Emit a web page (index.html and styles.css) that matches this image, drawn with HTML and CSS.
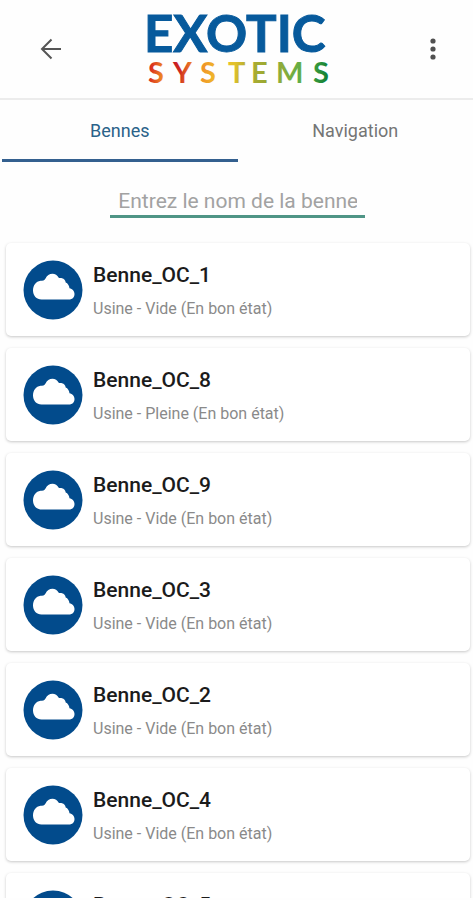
FILE: index.html
```html
<!DOCTYPE html>
<html lang="fr">
<head>
<meta charset="utf-8">
<meta name="viewport" content="width=device-width, initial-scale=1">
<title>Exotic Systems</title>
<link rel="stylesheet" href="styles.css">
</head>
<body>
<svg class="defs" aria-hidden="true">
  <symbol id="cloud" viewBox="0 0 60 60">
    <circle cx="30" cy="30" r="29.5" fill="#024b8c"/>
    <path fill="#fff" d="M18.500 39.500C13.500 39.500 10 35.500 10 30.500C10 25.500 13 21.500 17.500 20.800C19.500 20.500 21.500 20.800 22.500 18.500C23.800 15.500 26.500 13.800 29.500 13.800C32 13.800 34.500 15.300 35.500 17.500C36.500 18.500 37.500 17.700 39 18.200C41 18.800 42.500 20.300 42.700 22.500C44.800 23.300 46.200 25.500 46.500 28.300C49.300 28.800 51.500 31.200 51.500 34C51.500 37.300 49.300 39.500 46 39.500Z"/>
  </symbol>
</svg>
<header class="bar">
  <button class="icon-button" aria-label="Retour">
    <svg width="24" height="24" viewBox="0 0 24 24"><path d="M22 12H3M12.500 2.500L3 12L12.500 21.500" fill="none" stroke="#555" stroke-width="2"/></svg>
  </button>
  <svg class="logo" width="190" height="98" viewBox="0 0 190 98" role="img" aria-label="Exotic Systems">
    <defs>
      <linearGradient id="spectrum" gradientUnits="userSpaceOnUse" x1="2" y1="60" x2="186" y2="80">
        <stop offset="0" stop-color="#c91420"/>
        <stop offset=".04" stop-color="#dc3a20"/>
        <stop offset=".11" stop-color="#f29a26"/>
        <stop offset=".13" stop-color="#c41420"/>
        <stop offset=".19" stop-color="#cf2a20"/>
        <stop offset=".25" stop-color="#ee8a25"/>
        <stop offset=".31" stop-color="#f09428"/>
        <stop offset=".4" stop-color="#eec32c"/>
        <stop offset=".48" stop-color="#e2c12c"/>
        <stop offset=".54" stop-color="#b5ae32"/>
        <stop offset=".66" stop-color="#98a832"/>
        <stop offset=".74" stop-color="#8dac3c"/>
        <stop offset=".86" stop-color="#55ad48"/>
        <stop offset=".91" stop-color="#3c9a3c"/>
        <stop offset="1" stop-color="#087a35"/>
      </linearGradient>
    </defs>
    <text class="logo-name" x="0" y="52">EXOTIC</text>
    <text class="logo-sub" x="4 29 56 84 107 132 169" y="83">SYSTEMS</text>
  </svg>
  <button class="icon-button" aria-label="Plus d'options">
    <svg width="24" height="24" viewBox="0 0 24 24" fill="#505050"><circle cx="12" cy="4" r="2.600"/><circle cx="12" cy="12" r="2.600"/><circle cx="12" cy="20" r="2.600"/></svg>
  </button>
</header>
<nav class="tabs">
  <a class="tab active" href="#bennes" aria-current="page">Bennes</a>
  <a class="tab" href="#navigation">Navigation</a>
</nav>
<main>
  <div class="search"><input type="text" aria-label="Nom de la benne" placeholder="Entrez le nom de la benne"></div>
  <ul class="list">
    <li class="card"><svg class="avatar" aria-hidden="true"><use href="#cloud"/></svg><div class="info"><h2>Benne_OC_1</h2><p>Usine - Vide (En bon état)</p></div></li>
    <li class="card"><svg class="avatar" aria-hidden="true"><use href="#cloud"/></svg><div class="info"><h2>Benne_OC_8</h2><p>Usine - Pleine (En bon état)</p></div></li>
    <li class="card"><svg class="avatar" aria-hidden="true"><use href="#cloud"/></svg><div class="info"><h2>Benne_OC_9</h2><p>Usine - Vide (En bon état)</p></div></li>
    <li class="card"><svg class="avatar" aria-hidden="true"><use href="#cloud"/></svg><div class="info"><h2>Benne_OC_3</h2><p>Usine - Vide (En bon état)</p></div></li>
    <li class="card"><svg class="avatar" aria-hidden="true"><use href="#cloud"/></svg><div class="info"><h2>Benne_OC_2</h2><p>Usine - Vide (En bon état)</p></div></li>
    <li class="card"><svg class="avatar" aria-hidden="true"><use href="#cloud"/></svg><div class="info"><h2>Benne_OC_4</h2><p>Usine - Vide (En bon état)</p></div></li>
    <li class="card"><svg class="avatar" aria-hidden="true"><use href="#cloud"/></svg><div class="info"><h2>Benne_OC_5</h2><p>Usine - Vide (En bon état)</p></div></li>
  </ul>
</main>
</body>
</html>
```
FILE: styles.css
```css
* { box-sizing: border-box; }
body {
  margin: 0;
  height: 100vh;
  padding-bottom: 2px;
  display: flex;
  flex-direction: column;
  overflow: hidden;
  background: #fefefe;
  font-family: Roboto, "Liberation Sans", sans-serif;
}
.defs { display: none; }
.bar {
  flex: none;
  display: flex;
  align-items: center;
  justify-content: space-between;
  height: 100px;
  padding: 0 16px;
  border-bottom: 2px solid #ececec;
}
.icon-button {
  display: flex;
  align-items: center;
  justify-content: center;
  width: 48px;
  height: 48px;
  margin-left: 12px;
  padding: 0;
  border: 0;
  background: none;
}
.icon-button:first-child { margin: 0 6px 0 11px; }
.logo { overflow: visible; }
.logo-name { font: 700 51px Lato, sans-serif; fill: #075a9c; stroke: #075a9c; stroke-width: 1px; }
.logo-sub { font: 700 29px Lato, sans-serif; fill: url(#spectrum); }
.tabs { flex: none; display: flex; padding-left: 2px; }
.tab {
  flex: 1;
  height: 62px;
  border-bottom: 3px solid transparent;
  line-height: 62px;
  text-align: center;
  text-decoration: none;
  font-size: 18px;
  color: #757575;
}
.tab.active { color: #2a6289; border-color: #34608f; }
main { flex: 1; min-height: 0; overflow: hidden; }
.search { display: flex; justify-content: center; padding: 22px 0 24px 2px; }
.search input {
  width: 54%;
  height: 34px;
  padding: 2px 8px 0;
  border: 0;
  border-bottom: 3px solid #4f9586;
  outline: 0;
  background: none;
  font: 21px Roboto, sans-serif;
  color: #444;
}
.search input::placeholder { color: #a2a2a2; opacity: 1; }
.list { display: grid; gap: 12px; margin: 0; padding: 1px 3px 8px 6px; list-style: none; }
.card {
  display: flex;
  align-items: center;
  gap: 10px;
  height: 93px;
  padding: 0 17px;
  border-radius: 5px;
  background: #fff;
  box-shadow: 0 1px 3px rgba(0, 0, 0, .22);
}
.avatar { flex: none; width: 60px; height: 60px; }
.info { padding-top: 2px; }
h2 { margin: 0; font-size: 21px; font-weight: 500; line-height: 28px; color: #1b1b1b; }
p { margin: 8px 0 0; font-size: 16px; line-height: 24px; color: #8a8a8a; }
```
